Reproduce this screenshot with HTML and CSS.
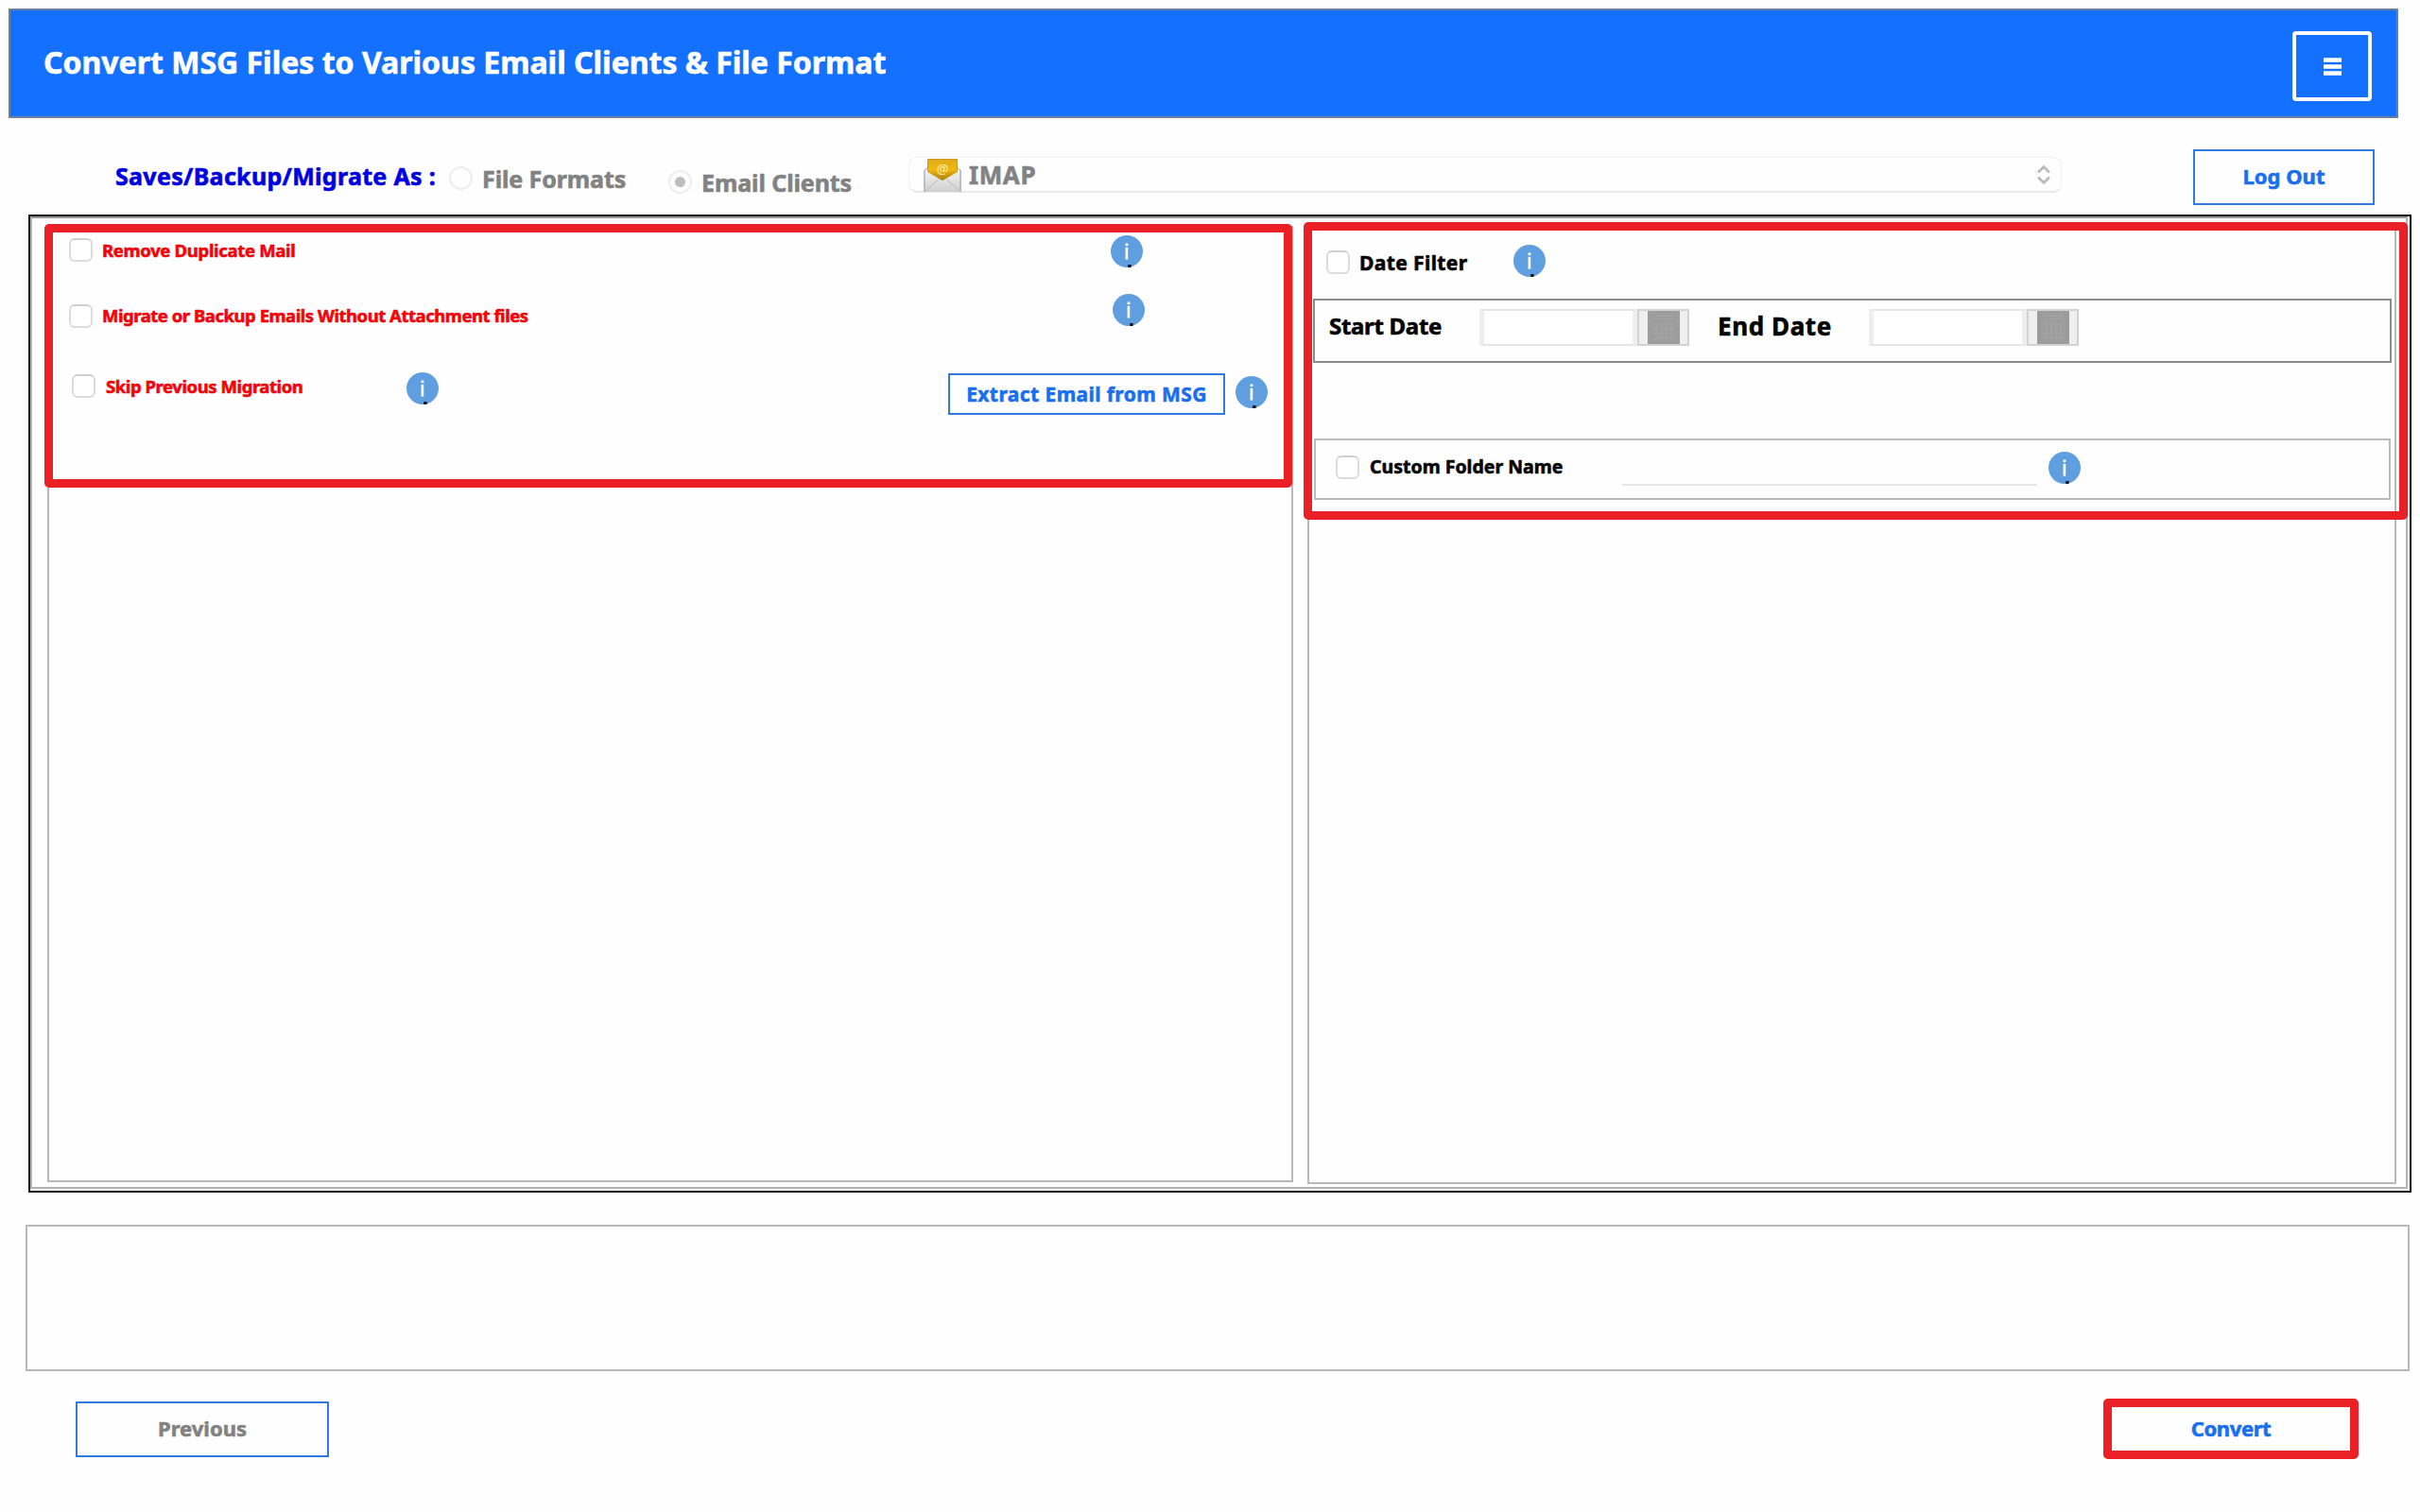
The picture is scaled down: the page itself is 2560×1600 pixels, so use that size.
FILE: index.html
```html
<!DOCTYPE html>
<html lang="en">
<head>
  <meta charset="UTF-8">
  <title>Convert MSG Files</title>
  <link rel="stylesheet" href="styles.css">
</head>
<body>

<svg class="defs">
  <symbol id="info" viewBox="0 0 34 34">
    <circle cx="17" cy="17" r="17" fill="#609fdf"/>
    <rect x="15.6" y="8.5" width="2.8" height="2.6" fill="#fff"/>
    <rect x="15.6" y="12.8" width="2.6" height="12.8" fill="#fff"/>
    <rect x="18.2" y="31" width="3.4" height="3" fill="#111"/>
  </symbol>
  <symbol id="calendar" viewBox="0 0 34 35">
    <rect width="34" height="35" fill="#9d9d9d"/>
    <path d="M9 5h18M13 8h13M6 14h22M6 19h22M6 24h22M6 29h22M10 14v15M15 14v15M20 14v15M25 14v15" stroke="#a6a6a6" stroke-width="1" fill="none"/>
  </symbol>
</svg>

<header class="header">
  <h1>Convert MSG Files to Various Email Clients &amp; File Format</h1>
  <button class="menu-btn">
    <svg width="19" height="19"><path d="M0 2.5h19M0 9.5h19M0 16.5h19" stroke="#fff" stroke-width="4.6"/></svg>
  </button>
</header>

<div class="save-bar">
  <span class="save-label">Saves/Backup/Migrate As :</span>
  <span class="radio"></span>
  <span class="radio-label formats">File Formats</span>
  <span class="radio checked"></span>
  <span class="radio-label clients">Email Clients</span>
  <div class="combo">
    <svg class="mail" width="40" height="35" viewBox="0 0 40 35">
      <defs>
        <linearGradient id="gold" x1="0" y1="0" x2="0" y2="1">
          <stop offset="0" stop-color="#e3a81c"/>
          <stop offset="0.5" stop-color="#f0b90c"/>
          <stop offset="1" stop-color="#a97908"/>
        </linearGradient>
        <linearGradient id="paper" x1="0" y1="0" x2="0" y2="1">
          <stop offset="0" stop-color="#f4f4f4"/>
          <stop offset="1" stop-color="#cfcfcf"/>
        </linearGradient>
      </defs>
      <path d="M1 12L5 9h30l4 3v23H1z" fill="url(#paper)" stroke="#a5a5a5"/>
      <path d="M4.500 0.500H35.500V14L20 23L4.500 14z" fill="url(#gold)" stroke="#c79a2a"/>
      <text class="at" x="20" y="15.500" text-anchor="middle">@</text>
      <path d="M1 12L20 23.500L39 12V35H1z" fill="url(#paper)"/>
      <path d="M1 35V12M39 35V12" stroke="#a5a5a5"/>
      <path d="M3 33L16 21.500M37 33L24 21.500" stroke="#b9b9b9" fill="none"/>
    </svg>
    <span>IMAP</span>
    <svg class="arrows" width="16" height="22"><path d="M2 8.500L8 2.500L14 8.500M2 13.500L8 19.500L14 13.500" fill="none" stroke="#b9b9b9" stroke-width="2.600"/></svg>
  </div>
  <button class="btn logout">Log Out</button>
</div>

<main class="workspace">
  <div class="frame">
    <section class="panel left">
      <div class="marked options">
        <div class="row duplicate">
          <span class="check"></span>
          <label>Remove Duplicate Mail</label>
          <svg class="info"><use href="#info"/></svg>
        </div>
        <div class="row attachment">
          <span class="check"></span>
          <label>Migrate or Backup Emails Without Attachment files</label>
          <svg class="info"><use href="#info"/></svg>
        </div>
        <div class="row skip">
          <span class="check"></span>
          <label>Skip Previous Migration</label>
          <svg class="info"><use href="#info"/></svg>
          <button class="btn extract">Extract Email from MSG</button>
          <svg class="info"><use href="#info"/></svg>
        </div>
      </div>
    </section>

    <section class="panel right">
      <div class="marked filters">
        <div class="row date-filter">
          <span class="check"></span>
          <label>Date Filter</label>
          <svg class="info"><use href="#info"/></svg>
        </div>
        <div class="date-range">
          <label class="start">Start Date</label>
          <span class="date-input"></span>
          <span class="date-btn"><svg><use href="#calendar"/></svg></span>
          <label class="end">End Date</label>
          <span class="date-input"></span>
          <span class="date-btn"><svg><use href="#calendar"/></svg></span>
        </div>
        <div class="folder">
          <span class="check"></span>
          <label>Custom Folder Name</label>
          <span class="folder-input"></span>
          <svg class="info"><use href="#info"/></svg>
        </div>
      </div>
    </section>
  </div>
</main>

<div class="log"></div>

<footer class="footer">
  <button class="btn previous">Previous</button>
  <button class="btn marked convert">Convert</button>
</footer>

</body>
</html>
```
FILE: styles.css
```css
* {
  box-sizing: border-box;
}

body {
  margin: 0;
  width: 2560px;
  height: 1600px;
  overflow: hidden;
  background: #fefefe;
  font-family: "Noto Sans", "Open Sans", sans-serif;
  font-weight: bold;
  -webkit-text-stroke: 0.6px currentColor;
}

button {
  font-family: inherit;
  font-weight: bold;
  padding: 0;
}

svg {
  display: block;
  flex: none;
}

.defs {
  width: 0;
  height: 0;
}

.header {
  display: flex;
  align-items: center;
  justify-content: space-between;
  margin: 9px 0 0 9px;
  width: 2528px;
  height: 116px;
  padding: 0 26px 0 35px;
  background: #1470ff;
  border: 2px solid #6d7f9c;
}

.header h1 {
  margin: 0 0 2px;
  color: #fff;
  font-size: 32px;
  line-height: 44px;
  white-space: nowrap;
}

.menu-btn {
  display: flex;
  align-items: center;
  justify-content: center;
  width: 84px;
  height: 74px;
  margin-top: 6px;
  background: none;
  border: 4px solid #fff;
  border-radius: 4px;
}

.save-bar {
  display: flex;
  align-items: flex-start;
  height: 102px;
  padding-left: 122px;
  font-size: 25px;
  line-height: 34px;
  white-space: nowrap;
}

.save-label {
  width: 353px;
  margin-top: 44px;
  color: #0000e0;
  letter-spacing: 0.3px;
}

.radio {
  width: 25px;
  height: 25px;
  margin-top: 51px;
  border: 2px solid #ededed;
  border-radius: 50%;
}

.radio.checked {
  display: flex;
  align-items: center;
  justify-content: center;
  margin-top: 55px;
}

.radio.checked::after {
  content: "";
  width: 11px;
  height: 11px;
  border-radius: 50%;
  background: #bdbdbd;
}

.radio-label {
  color: #828282;
  letter-spacing: -0.1px;
}

.formats {
  width: 197px;
  margin: 47px 0 0 10px;
}

.clients {
  width: 219px;
  margin: 51px 0 0 10px;
}

.combo {
  display: flex;
  align-items: center;
  width: 1220px;
  height: 38px;
  margin-top: 41px;
  padding: 0 10px 0 15px;
  border: 1px solid #f0f0f0;
  border-bottom: 2px solid #e9e9e9;
  border-radius: 9px;
  color: #828282;
  font-size: 26px;
  letter-spacing: 0.6px;
}

.combo span {
  margin-left: 8px;
}

.mail {
  margin-top: 2px;
}

.at {
  fill: #fbe9a8;
  font-size: 14px;
  font-weight: normal;
  letter-spacing: 0;
  -webkit-text-stroke: 0;
}

.arrows {
  margin-left: auto;
}

.btn {
  background: #fefefe;
  border: 2px solid #2f7be0;
  color: #1a6fee;
  white-space: nowrap;
}

.logout {
  width: 192px;
  height: 59px;
  margin: 33px 0 0 139px;
  padding-bottom: 3px;
  font-size: 22px;
}

.workspace {
  width: 2521px;
  height: 1035px;
  margin-left: 30px;
  border: 2px solid #111;
}

.frame {
  display: flex;
  align-items: flex-start;
  width: 2515px;
  height: 1029px;
  border: 2px solid #b4b4b4;
  border-top-color: #999;
}

.panel {
  flex: none;
  border: 2px solid #b8b8b8;
}

.panel.left {
  width: 1318px;
  height: 1012px;
  margin: 8px 0 0 16px;
}

.panel.right {
  width: 1152px;
  height: 1014px;
  margin: 8px 0 0 15px;
}

/* red highlight boxes */
.marked {
  border: 9px solid #eb1f26;
  border-radius: 5px;
}

.options {
  width: 1320px;
  height: 279px;
  margin: -4px 0 0 -5px;
  color: #f0050a;
  font-size: 18.5px;
}

.row {
  display: flex;
  align-items: flex-start;
  line-height: 26px;
  white-space: nowrap;
}

.check {
  flex: none;
  width: 25px;
  height: 25px;
  background: #fff;
  border: 2px solid #dcdcdc;
  border-top-color: #cfcfcf;
  border-radius: 6px;
}

.info {
  width: 34px;
  height: 34px;
}

.duplicate {
  height: 65px;
  padding: 3px 0 0 17px;
}

.duplicate .check {
  margin-top: 3px;
}

.duplicate label {
  width: 1067px;
  margin: 3px 0 0 10px;
  letter-spacing: -0.32px;
}

.attachment {
  height: 83px;
  padding-left: 17px;
}

.attachment .check {
  margin-top: 11px;
}

.attachment label {
  width: 1069px;
  margin: 10px 0 0 10px;
  letter-spacing: -0.47px;
}

.skip {
  padding-left: 20px;
}

.skip .check {
  margin-top: 2px;
}

.skip label {
  width: 318px;
  margin: 2px 0 0 11px;
  letter-spacing: -0.43px;
}

.skip .extract + .info {
  margin: 4px 0 0 11px;
}

.extract {
  width: 293px;
  height: 44px;
  margin: 1px 0 0 539px;
  font-size: 21px;
  letter-spacing: 0.42px;
}

.filters {
  width: 1168px;
  height: 315px;
  margin: -6px 0 0 -6px;
  color: #050505;
}

.date-filter {
  height: 72px;
  padding: 15px 0 0 15px;
  font-size: 21px;
}

.date-filter .check {
  margin-top: 6px;
}

.date-filter label {
  width: 163px;
  margin: 6px 0 0 10px;
  letter-spacing: 0.4px;
}

.date-range {
  display: flex;
  align-items: flex-start;
  width: 1141px;
  height: 68px;
  margin-left: 1px;
  padding: 9px 0 0 15px;
  border: 2px solid #8b8b8b;
  font-size: 24px;
  line-height: 34px;
  white-space: nowrap;
}

.start {
  width: 159px;
  margin-top: 1px;
  letter-spacing: -0.3px;
}

.end {
  width: 160px;
  margin: 1px 0 0 30px;
  font-size: 26px;
  letter-spacing: 0.6px;
}

.date-input {
  width: 167px;
  height: 39px;
  background: #fff;
  border: 2px solid #e4e4e4;
  border-width: 2px 5px;
  border-color: #e6e6e6 #eee;
}

.date-btn {
  display: flex;
  align-items: center;
  justify-content: center;
  width: 55px;
  height: 39px;
  background: #efefef;
  border: 2px solid #d2d2d2;
}

.date-btn svg {
  width: 34px;
  height: 35px;
}

.folder {
  display: flex;
  align-items: flex-start;
  width: 1139px;
  height: 65px;
  margin: 80px 0 0 2px;
  padding: 12px 0 0 21px;
  border: 2px solid #bababa;
  font-size: 19.5px;
  line-height: 26px;
  white-space: nowrap;
}

.folder .check {
  margin-top: 4px;
}

.folder label {
  width: 267px;
  margin: 3px 0 0 11px;
}

.folder-input {
  width: 439px;
  height: 36px;
  margin-right: 12px;
  border-bottom: 2px solid #e6e6e6;
}

.log {
  width: 2522px;
  height: 155px;
  margin: 34px 0 0 27px;
  border: 2px solid #b8b8b8;
}

.footer {
  display: flex;
  align-items: flex-start;
  justify-content: space-between;
  width: 2415px;
  margin: 29px 0 0 80px;
}

.previous {
  width: 268px;
  height: 59px;
  margin-top: 3px;
  padding-bottom: 3px;
  color: #828282;
  font-size: 22px;
}

.convert {
  width: 270px;
  height: 64px;
  padding-bottom: 2px;
  border: 9px solid #eb1f26;
  font-size: 22px;
  letter-spacing: -0.4px;
}
```
